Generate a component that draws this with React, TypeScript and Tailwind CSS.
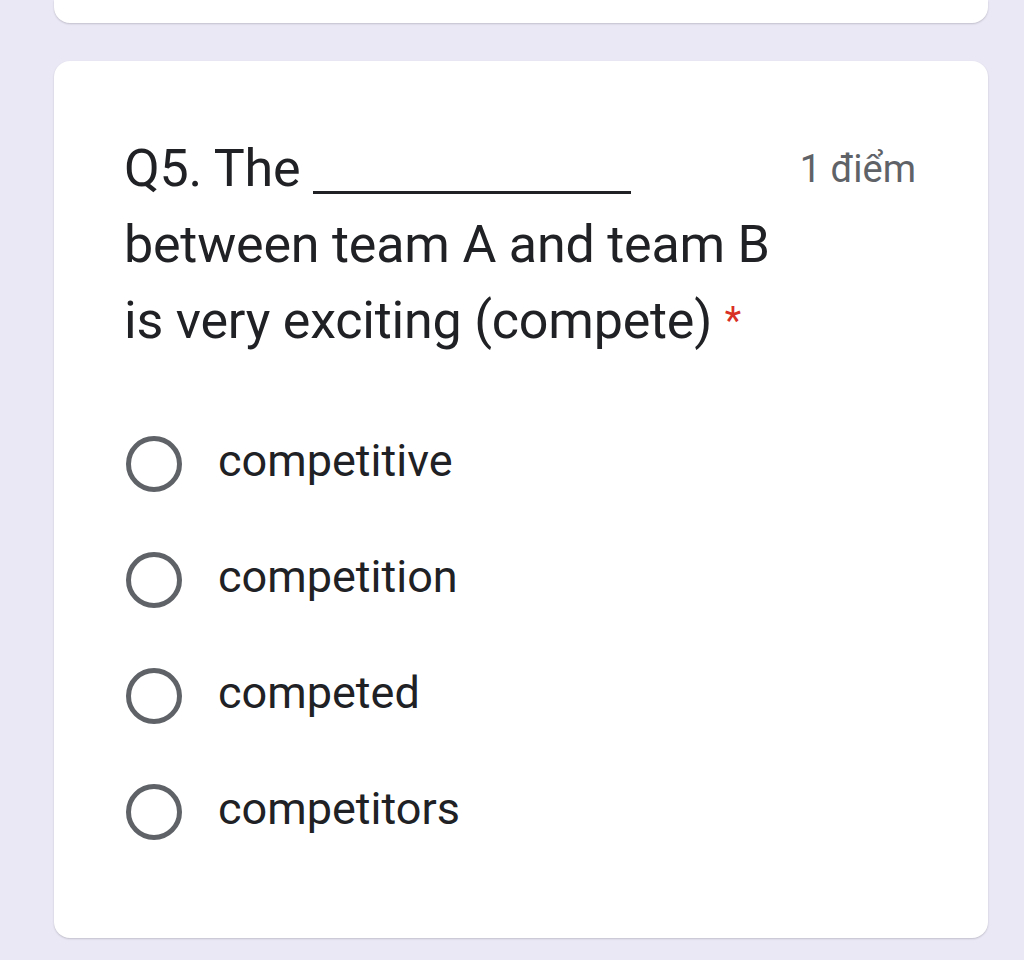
import React from "react";

const options = ["competitive", "competition", "competed", "competitors"];

export default function App() {
  return (
    <div className="w-[1024px] h-[960px] bg-[#ebe8f6] overflow-hidden pl-[54px] pr-[36px] flex flex-col">
      <div className="h-[23px] bg-white rounded-b-[16px] shadow-[0_1px_2px_rgba(0,0,0,0.18)] shrink-0" />
      <div className="mt-[38px] h-[877px] bg-white rounded-[16px] shadow-[0_1px_2px_rgba(0,0,0,0.18)] pl-[70px] pr-[72px] pt-[80px] shrink-0">
        <div className="flex justify-between items-start">
          <div
            className="text-[52px] leading-[76px] text-[#202124] -mt-[10px] tracking-[-0.2px]"
            style={{ fontFamily: "Roboto, 'Open Sans', sans-serif" }}
          >
            <div>
              Q5. The{" "}
              <span className="inline-block w-[318px] border-b-[3px] border-[#202124] align-baseline translate-y-[8px]" />
            </div>
            <div>between team A and team B</div>
            <div>
              is very exciting (compete) <span className="text-[#d93025] text-[38px] align-top">*</span>
            </div>
          </div>
          <div
            className="text-[38px] text-[#5f6368] leading-[40px] mt-[8px]"
            style={{ fontFamily: "Roboto, sans-serif" }}
          >
            1 điểm
          </div>
        </div>
        <div className="mt-[77px] flex flex-col gap-[60px]">
          {options.map((o) => (
            <div key={o} className="flex items-center h-[56px]">
              <div className="w-[56px] h-[56px] rounded-full border-[5px] border-[#5f6368] ml-[2px] shrink-0" />
              <span
                className="ml-[36px] text-[45px] text-[#202124] -translate-y-[3px]"
                style={{ fontFamily: "Roboto, sans-serif" }}
              >
                {o}
              </span>
            </div>
          ))}
        </div>
      </div>
    </div>
  );
}
